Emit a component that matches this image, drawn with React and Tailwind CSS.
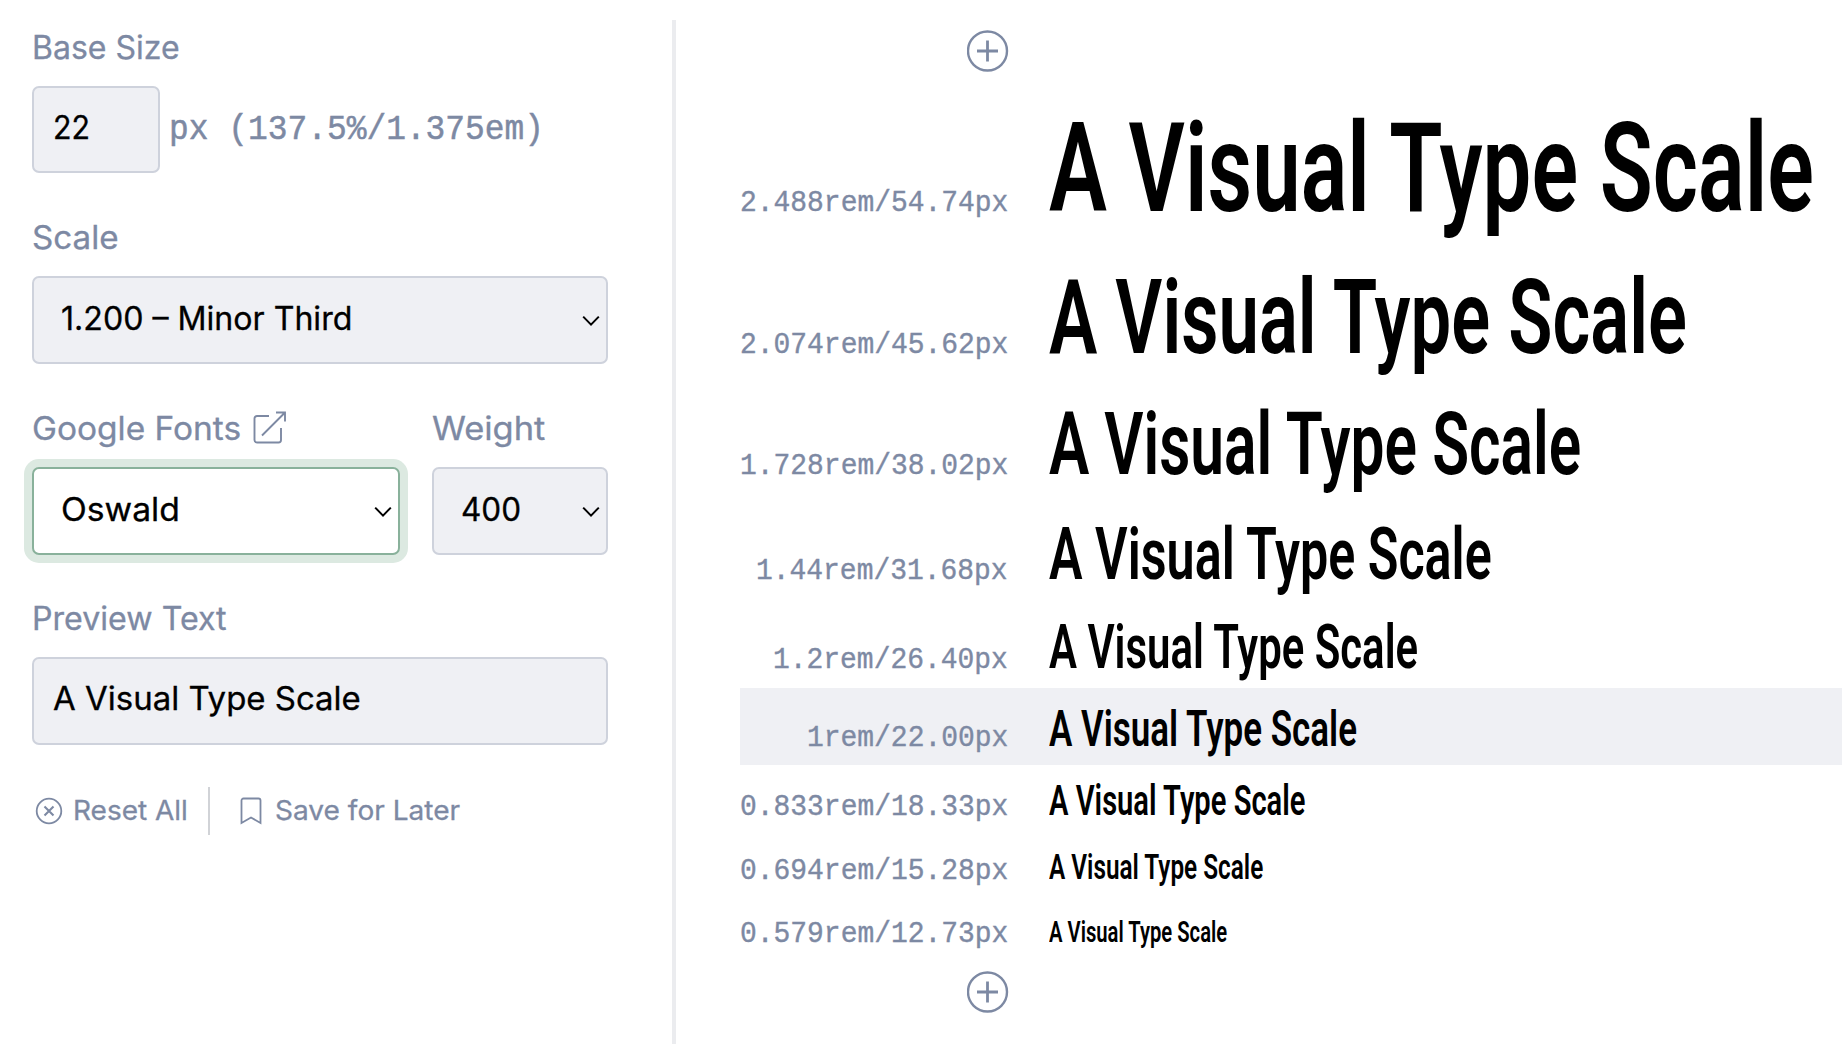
import { useLayoutEffect, useRef, useState } from "react";

// Condenses or widens a single line of text to an exact width.
function Fit({ width, className = "", children }) {
  const ref = useRef(null);
  const [scale, setScale] = useState(1);
  useLayoutEffect(() => {
    setScale(width / ref.current.offsetWidth);
  }, [width, children]);
  return (
    <span className="block" style={{ width }}>
      <span
        ref={ref}
        className={"inline-block origin-left whitespace-pre " + className}
        style={{ transform: `scaleX(${scale})` }}
      >
        {children}
      </span>
    </span>
  );
}

const Label = ({ width, children }) => (
  <Fit width={width} className="text-[32px] leading-[46px] text-[#7d89a3] [-webkit-text-stroke:0.300px_#7d89a3]">
    {children}
  </Fit>
);

const Chevron = () => (
  <svg width="18" height="12" viewBox="0 0 18 12" fill="none" stroke="black" strokeWidth="2" className="mt-[3px] shrink-0">
    <path d="M1.2 1.6 9 9.6l7.800-8" />
  </svg>
);

const Plus = () => (
  <svg width="42" height="42" viewBox="0 0 42 42" fill="none" stroke="#7d89a3" strokeWidth="2.4">
    <circle cx="20.500" cy="21" r="19.500" />
    <path d="M20.500 10.500v21M10 21h21" strokeWidth="2.800" />
  </svg>
);

function Box({ className = "", focused = false, chevron = false, width, children }) {
  return (
    <div
      className={
        "flex items-center justify-between rounded-[7px] border-2 pr-[6px] " +
        (focused
          ? "border-[#89b19b] bg-white shadow-[0_0_0_8px_#dce9e1] "
          : "border-[#ced2dc] bg-[#eff0f4] ") +
        (chevron ? "h-[88px] pb-[2px] pl-[27px] " : "pb-[4px] pl-[19px] ") +
        className
      }
    >
      <Fit width={width} className="text-[32px] leading-[48px] text-black [-webkit-text-stroke:0.300px_black]">
        {children}
      </Fit>
      {chevron && <Chevron />}
    </div>
  );
}

const rows = [
  { label: "2.488rem/54.74px", row: "h-[150px]", size: "text-[125px]", width: 765 },
  { label: "2.074rem/45.62px", row: "h-[142px]", size: "text-[104px]", width: 638 },
  { label: "1.728rem/38.02px", row: "h-[121px]", size: "text-[87px]", width: 532 },
  { label: "1.44rem/31.68px", row: "h-[105px]", size: "text-[72.400px]", width: 443 },
  { label: "1.2rem/26.40px", row: "h-[90px] pb-[1px]", size: "text-[60.300px]", width: 369 },
  { label: "1rem/22.00px", row: "h-[77px] bg-[#eff0f4]", size: "text-[50.300px]", width: 308 },
  { label: "0.833rem/18.33px", row: "h-[69px]", size: "text-[41.900px]", width: 256.5 },
  { label: "0.694rem/15.28px", row: "h-[64px]", size: "text-[34.900px]", width: 214 },
  { label: "0.579rem/12.73px", row: "h-[63px]", size: "text-[29.100px]", width: 178 },
];

export default function App() {
  return (
    <div className="flex h-[1044px] w-[1842px] overflow-hidden bg-white font-['Inter',sans-serif]">
      <aside className="w-[672px] shrink-0 pt-[25px] pl-[32px]">
        <div className="flex h-[190px] flex-col">
          <Label width={148}>Base Size</Label>
          <div className="mt-[15px] flex h-[87px] items-center">
            <Box className="h-[87px] w-[128px]" width={37}>22</Box>
            <div className="ml-[9px] pt-[1px] font-['Liberation_Mono',monospace] text-[35px] leading-[48px] text-[#7d89a3] [-webkit-text-stroke:0.500px_#7d89a3]">
              <Fit width={375}>px (137.5%/1.375em)</Fit>
            </div>
          </div>
        </div>
        <div className="h-[191px] w-[576px]">
          <Label width={87}>Scale</Label>
          <Box className="mt-[15px]" width={291} chevron>1.200 – Minor Third</Box>
        </div>
        <div className="flex h-[190px] w-[576px] gap-[32px]">
          <div className="w-[368px]">
            <div className="flex items-center gap-[12px]">
              <Label width={209}>Google Fonts</Label>
              <svg width="34" height="34" viewBox="0 0 34 34" fill="none" stroke="#7d89a3" strokeWidth="1.900" className="mt-[-2px]">
                <path d="M16 5H4a2.500 2.500 0 0 0-2.500 2.500V29A2.500 2.500 0 0 0 4 31.500h21.500A2.500 2.500 0 0 0 28 29V17M9 24.500 31.500 2M23 1.500h9v9" />
              </svg>
            </div>
            <Box className="mt-[15px]" width={119} focused chevron>Oswald</Box>
          </div>
          <div className="w-[176px]">
            <Label width={113}>Weight</Label>
            <Box className="mt-[15px]" width={60} chevron>400</Box>
          </div>
        </div>
        <div className="h-[191px] w-[576px]">
          <Label width={195}>Preview Text</Label>
          <Box className="mt-[15px] h-[88px]" width={308}>A Visual Type Scale</Box>
        </div>
        <div className="flex h-[48px] items-center text-[27px] leading-[40px] text-[#7d89a3] [-webkit-text-stroke:0.300px_#7d89a3]">
          <svg width="28" height="28" viewBox="0 0 28 28" fill="none" stroke="#7d89a3" strokeWidth="1.800" className="ml-[3px]">
            <circle cx="14" cy="14" r="12.300" />
            <path d="m9.500 9.500 9 9m0-9-9 9" strokeWidth="2.100" />
          </svg>
          <Fit width={115} className="ml-[10px]">Reset All</Fit>
          <div className="ml-[30px] h-[48px] w-[2px] bg-[#d1d3d7]" />
          <svg width="22" height="28" viewBox="0 0 22 28" fill="none" stroke="#7d89a3" strokeWidth="1.800" className="ml-[30px]">
            <path d="M1.500 26V3.500a2 2 0 0 1 2-2h15a2 2 0 0 1 2 2V26L11 20.500Z" />
          </svg>
          <Fit width={185} className="ml-[13px]">Save for Later</Fit>
        </div>
      </aside>
      <div className="mt-[20px] w-[4px] shrink-0 bg-[#ebecef]" />
      <main className="ml-[64px] min-w-0 grow pt-[30px]">
        <div className="flex h-[50px] w-[269px] justify-end">
          <Plus />
        </div>
        {rows.map((r) => (
          <div key={r.label} className={"flex items-baseline-last " + r.row}>
            <div className="flex w-[268px] shrink-0 justify-end font-['Liberation_Mono',monospace] text-[30px] leading-[54px] text-[#7d89a3] [-webkit-text-stroke:0.400px_#7d89a3]">
              <Fit width={r.label.length * 16.77}>{r.label}</Fit>
            </div>
            <div className={"ml-[41px] font-['Roboto',sans-serif] leading-[0] font-semibold text-black " + r.size}>
              <Fit width={r.width}>A Visual Type Scale</Fit>
            </div>
          </div>
        ))}
        <div className="flex w-[269px] justify-end pt-[10px]">
          <Plus />
        </div>
      </main>
    </div>
  );
}
